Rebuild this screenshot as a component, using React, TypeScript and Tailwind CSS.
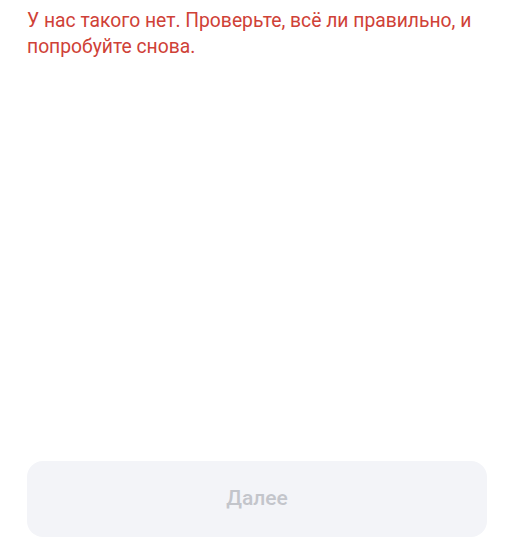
export default function App() {
  return (
    <div className="flex h-[545px] w-[514px] flex-col bg-white px-[27px] pb-2 font-['Roboto',sans-serif]">
      <p className="pt-[8px] text-[19.3px] leading-[26px] text-[#cf4137]">
        У нас такого нет. Проверьте, всё ли правильно, и попробуйте снова.
      </p>
      <div className="flex-1" />
      <button
        type="button"
        disabled
        className="h-[76px] w-full rounded-2xl bg-[#f3f4f8] text-[21px] font-medium text-[#c3c5cb]"
      >
        Далее
      </button>
    </div>
  );
}
